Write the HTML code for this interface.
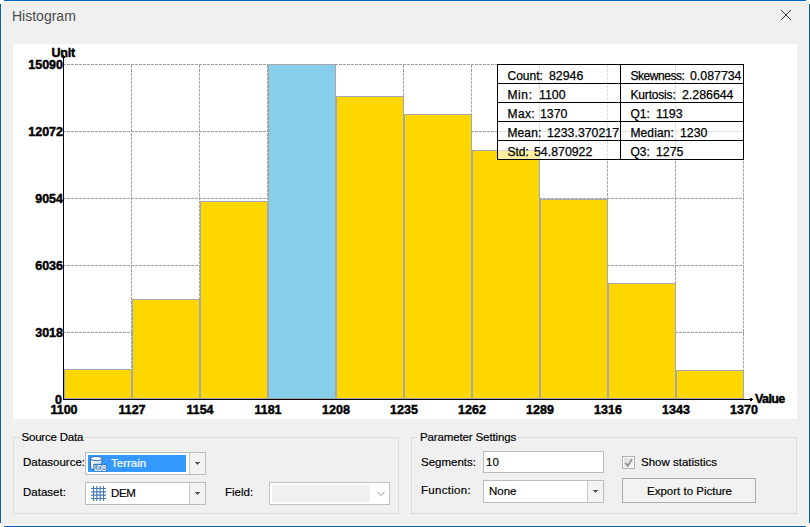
<!DOCTYPE html>
<html lang="en">
<head>
<meta charset="utf-8">
<title>Histogram</title>
<style>
  html, body { margin: 0; padding: 0; }
  body {
    width: 810px; height: 527px; overflow: hidden; position: relative;
    background: #ffffff;
    font-family: "Liberation Sans", sans-serif;
    font-size: 12px; color: #000;
  }
  .abs { position: absolute; }
  .t { position: absolute; white-space: pre; line-height: 14px; height: 14px; }
  #win { left: 1px; top: 1px; width: 808px; height: 525px; background: #f0f0f0; border-radius: 3px; box-shadow: inset 0 0 0 1px #fdf7f1; }
  .bt { background: #0063be; }
  #title { left: 12px; top: 7px; font-size: 14px; line-height: 18px; height: 18px; color: #4a4a4a; }
  #chart { left: 13px; top: 44px; width: 784px; height: 375px; background: #fff; }
  .ax { font-weight: bold; font-size: 12.5px; -webkit-text-stroke: 0.45px #000; }
  .xc { width: 40px; text-align: center; }
  .st { font-size: 12px; -webkit-text-stroke: 0.25px #000; }
  .sv { font-size: 12.35px; }
  .ui { font-size: 11.5px; -webkit-text-stroke: 0.18px currentColor; }
  .gb { border: 1px solid #dcdcdc; box-sizing: border-box; }
  .gbl { background: #f0f0f0; padding: 0 2px; }
  .combo { box-sizing: border-box; border: 1px solid #bcbcbc; background: #fff; }
  .cbtn { box-sizing: border-box; border-left: 1px solid #c8c8c8; background: #f3f3f3; }
</style>
</head>
<body>

<!-- window frame -->
<div class="abs" id="win"></div>
<div class="abs bt" style="left:4px;top:0;width:802px;height:1px"></div>
<div class="abs bt" style="left:4px;top:526px;width:802px;height:1px"></div>
<div class="abs bt" style="left:0;top:4px;width:1px;height:519px"></div>
<div class="abs bt" style="left:809px;top:4px;width:1px;height:519px"></div>

<!-- title bar -->
<span class="t" id="title">Histogram</span>
<svg class="abs" style="left:780px;top:9px" width="12" height="12" viewBox="0 0 12 12">
  <path d="M1 1 L11 11 M11 1 L1 11" stroke="#3a3a3a" stroke-width="1" fill="none"/>
</svg>

<!-- chart -->
<div class="abs" id="chart"></div>
<svg class="abs" id="plot" style="left:0;top:0" width="810" height="527" viewBox="0 0 810 527" shape-rendering="crispEdges">
  <g stroke="#a0a0a0" stroke-width="1" stroke-dasharray="3 1" fill="none">
    <path d="M63 64.5H744 M63 131.5H744 M63 198.5H744 M63 265.5H744 M63 332.5H744"/>
    <path d="M131.5 400V64 M199.5 400V64 M267.5 400V64 M335.5 400V64 M403.5 400V64 M471.5 400V64 M539.5 400V64 M607.5 400V64 M675.5 400V64 M743.5 400V64"/>
  </g>
  <g stroke="#a6a6ae" stroke-width="1" fill="#ffd700">
    <rect x="64.5" y="369.5" width="67" height="29"/>
    <rect x="132.5" y="299.5" width="67" height="99"/>
    <rect x="200.5" y="201.5" width="67" height="197"/>
    <rect x="268.5" y="64.5" width="67" height="334" fill="#87ceeb"/>
    <rect x="336.5" y="96.5" width="67" height="302"/>
    <rect x="404.5" y="114.5" width="67" height="284"/>
    <rect x="472.5" y="150.5" width="67" height="248"/>
    <rect x="540.5" y="199.5" width="67" height="199"/>
    <rect x="608.5" y="283.5" width="67" height="115"/>
    <rect x="676.5" y="370.5" width="67" height="28"/>
  </g>
  <g fill="#000" stroke="none">
    <rect x="63" y="57" width="1" height="343"/>
    <rect x="63" y="399" width="689" height="1"/>
    <path d="M750 398h2v3h-2z M752 399h1v1h-1z M62 56h3v2h-3z M63 55h1v1h-1z"/>
  </g>
</svg>

<!-- axis labels -->
<span class="t ax" style="left:51.6px;top:46px;letter-spacing:-0.28px">Unit</span>
<span class="t ax" style="left:755px;top:392px;letter-spacing:-0.6px">Value</span>
<span class="t ax" style="right:747px;top:58px">15090</span>
<span class="t ax" style="right:747px;top:125px">12072</span>
<span class="t ax" style="right:747px;top:192px">9054</span>
<span class="t ax" style="right:747px;top:259px">6036</span>
<span class="t ax" style="right:747px;top:326px">3018</span>
<span class="t ax" style="right:748px;top:393px">0</span>
<span class="t ax xc" style="left:44px;top:403px">1100</span>
<span class="t ax xc" style="left:112px;top:403px">1127</span>
<span class="t ax xc" style="left:180px;top:403px">1154</span>
<span class="t ax xc" style="left:248px;top:403px">1181</span>
<span class="t ax xc" style="left:316px;top:403px">1208</span>
<span class="t ax xc" style="left:384px;top:403px">1235</span>
<span class="t ax xc" style="left:452px;top:403px">1262</span>
<span class="t ax xc" style="left:520px;top:403px">1289</span>
<span class="t ax xc" style="left:588px;top:403px">1316</span>
<span class="t ax xc" style="left:656px;top:403px">1343</span>
<span class="t ax xc" style="left:724px;top:403px">1370</span>

<!-- statistics box -->
<div class="abs" style="left:497px;top:64px;width:247px;height:96px;background:rgba(255,255,255,0.63)"></div>
<svg class="abs" style="left:0;top:0" width="810" height="527" viewBox="0 0 810 527" shape-rendering="crispEdges">
  <g stroke="#000" stroke-width="1" fill="none">
    <rect x="497.5" y="64.5" width="246" height="95"/>
    <path d="M497 83.5H744 M497 102.5H744 M497 121.5H744 M497 140.5H744 M620.5 64V160"/>
  </g>
</svg>
<span class="t st" style="left:507.5px;top:69px;letter-spacing:0px">Count:</span><span class="t st sv" style="left:549px;top:69px">82946</span>
<span class="t st" style="left:507.5px;top:88px;letter-spacing:0.6px">Min:</span><span class="t st sv" style="left:539px;top:88px">1100</span>
<span class="t st" style="left:507.5px;top:107px;letter-spacing:0.4px">Max:</span><span class="t st sv" style="left:540px;top:107px">1370</span>
<span class="t st" style="left:507.5px;top:126px;letter-spacing:0.1px">Mean:</span><span class="t st sv" style="left:547px;top:126px">1233.370217</span>
<span class="t st" style="left:507.5px;top:145px;letter-spacing:0px">Std:</span><span class="t st sv" style="left:534px;top:145px">54.870922</span>
<span class="t st" style="left:630.5px;top:69px;letter-spacing:-0.46px">Skewness:</span><span class="t st sv" style="left:690px;top:69px">0.087734</span>
<span class="t st" style="left:630.5px;top:88px;letter-spacing:-0.18px">Kurtosis:</span><span class="t st sv" style="left:682px;top:88px">2.286644</span>
<span class="t st" style="left:630.5px;top:107px;letter-spacing:0px">Q1:</span><span class="t st sv" style="left:656px;top:107px">1193</span>
<span class="t st" style="left:630.5px;top:126px;letter-spacing:0.1px">Median:</span><span class="t st sv" style="left:680px;top:126px">1230</span>
<span class="t st" style="left:630.5px;top:145px;letter-spacing:0px">Q3:</span><span class="t st sv" style="left:656px;top:145px">1275</span>

<!-- Source Data group -->
<div class="abs gb" style="left:13px;top:437px;width:386px;height:77px"></div>
<span class="t ui gbl" style="left:19.5px;top:430px;letter-spacing:-0.2px">Source Data</span>
<span class="t ui" style="left:23px;top:455px">Datasource:</span>
<span class="t ui" style="left:23px;top:485px">Dataset:</span>
<span class="t ui" style="left:225px;top:485px">Field:</span>

<!-- Datasource combo -->
<div class="abs combo" style="left:85px;top:452px;width:121px;height:23px"></div>
<div class="abs" style="left:88px;top:455px;width:98px;height:17px;background:#3399ff"></div>
<div class="abs cbtn" style="left:189px;top:453px;width:16px;height:21px"></div>
<svg class="abs" style="left:194px;top:461px" width="8" height="6" viewBox="0 0 8 6" shape-rendering="crispEdges"><path d="M1 2h5v1h-5z M2 3h3v1h-3z M3 4h1v1h-1z" fill="#fcfcfc"/><path d="M1 1h5v1h-5z" fill="#575757"/><path d="M2 2h3v1h-3z" fill="#5e5e5e"/><path d="M3 3h1v1h-1z" fill="#7a7a7a"/></svg>
<svg class="abs" style="left:89px;top:455px" width="19" height="17" viewBox="0 0 19 17">
  <defs><linearGradient id="cy" x1="0" x2="1" y1="0" y2="0"><stop offset="0" stop-color="#ffffff"/><stop offset="1" stop-color="#c9def5"/></linearGradient></defs>
  <path d="M1.5 3.6 V12.6 C1.5 14.2 4 15 7.3 15 C10.6 15 13 14.2 13 12.6 V3.6" fill="url(#cy)" stroke="#3873ba" stroke-width="1.2"/>
  <ellipse cx="7.25" cy="3.6" rx="5.75" ry="2.1" fill="#fdfeff" stroke="#3873ba" stroke-width="1.1"/>
  <rect x="4.2" y="8.7" width="13.6" height="7.8" rx="0.8" fill="#3d7cc4"/>
  <text x="5.1" y="15.7" font-family="Liberation Sans, sans-serif" font-weight="bold" font-size="8.2" fill="#fff" textLength="12" lengthAdjust="spacingAndGlyphs">UDB</text>
</svg>
<span class="t ui" style="left:111px;top:456px;color:#fff">Terrain</span>

<!-- Dataset combo -->
<div class="abs combo" style="left:85px;top:482px;width:121px;height:23px"></div>
<div class="abs cbtn" style="left:189px;top:483px;width:16px;height:21px"></div>
<svg class="abs" style="left:194px;top:491px" width="8" height="6" viewBox="0 0 8 6" shape-rendering="crispEdges"><path d="M1 2h5v1h-5z M2 3h3v1h-3z M3 4h1v1h-1z" fill="#fcfcfc"/><path d="M1 1h5v1h-5z" fill="#575757"/><path d="M2 2h3v1h-3z" fill="#5e5e5e"/><path d="M3 3h1v1h-1z" fill="#7a7a7a"/></svg>
<svg class="abs" style="left:90px;top:485px" width="17" height="17" viewBox="0 0 17 17">
  <g stroke="#3f74b1" stroke-width="1.15" fill="none" opacity="0.95">
    <path d="M3.5 1V16 M6.83 1V16 M10.17 1V16 M13.5 1V16"/>
    <path d="M1 3.5H16 M1 6.83H16 M1 10.17H16 M1 13.5H16"/>
  </g>
</svg>
<span class="t ui" style="left:111px;top:486px;letter-spacing:-0.4px">DEM</span>

<!-- Field combo -->
<div class="abs combo" style="left:269px;top:482px;width:121px;height:23px;border-color:#c3c3c3"></div>
<div class="abs" style="left:272px;top:485px;width:98px;height:17px;background:#f0f0f0"></div>
<svg class="abs" style="left:376px;top:490px" width="10" height="7" viewBox="0 0 10 7"><path d="M1.3 1.8 L5 5.5 L8.7 1.8" stroke="#8e8e8e" stroke-width="0.95" fill="none"/></svg>

<!-- Parameter Settings group -->
<div class="abs gb" style="left:411px;top:437px;width:386px;height:77px"></div>
<span class="t ui gbl" style="left:418px;top:430px;letter-spacing:-0.13px">Parameter Settings</span>
<span class="t ui" style="left:421px;top:455px">Segments:</span>
<span class="t ui" style="left:421px;top:483px;letter-spacing:0.3px">Function:</span>

<div class="abs combo" style="left:483px;top:451px;width:121px;height:22px"></div>
<span class="t ui" style="left:486px;top:455px">10</span>

<div class="abs combo" style="left:483px;top:480px;width:121px;height:23px"></div>
<div class="abs cbtn" style="left:587px;top:481px;width:16px;height:21px"></div>
<svg class="abs" style="left:592px;top:489px" width="8" height="6" viewBox="0 0 8 6" shape-rendering="crispEdges"><path d="M1 2h5v1h-5z M2 3h3v1h-3z M3 4h1v1h-1z" fill="#fcfcfc"/><path d="M1 1h5v1h-5z" fill="#575757"/><path d="M2 2h3v1h-3z" fill="#5e5e5e"/><path d="M3 3h1v1h-1z" fill="#7a7a7a"/></svg>
<span class="t ui" style="left:489px;top:484px">None</span>

<!-- checkbox -->
<div class="abs" style="left:622px;top:456px;width:13px;height:13px;box-sizing:border-box;border:1px solid #b0b0b0;background:#fbfbfb"></div>
<div class="abs" style="left:624px;top:458px;width:9px;height:9px;background:linear-gradient(135deg,#d9d9d9 0%,#ececec 55%,#f9f9f9 100%)"></div>
<svg class="abs" style="left:622px;top:456px" width="13" height="13" viewBox="0 0 13 13"><path d="M3.3 6.8 L5.8 9.9 L10 3" stroke="#989898" stroke-width="1.9" fill="none"/></svg>
<span class="t ui" style="left:641px;top:455px">Show statistics</span>

<!-- button -->
<div class="abs" style="left:622px;top:478px;width:134px;height:25px;box-sizing:border-box;border:1px solid #adadad;background:#f2f2f2"></div>
<span class="t ui" style="left:647px;top:484px">Export to Picture</span>

</body>
</html>
